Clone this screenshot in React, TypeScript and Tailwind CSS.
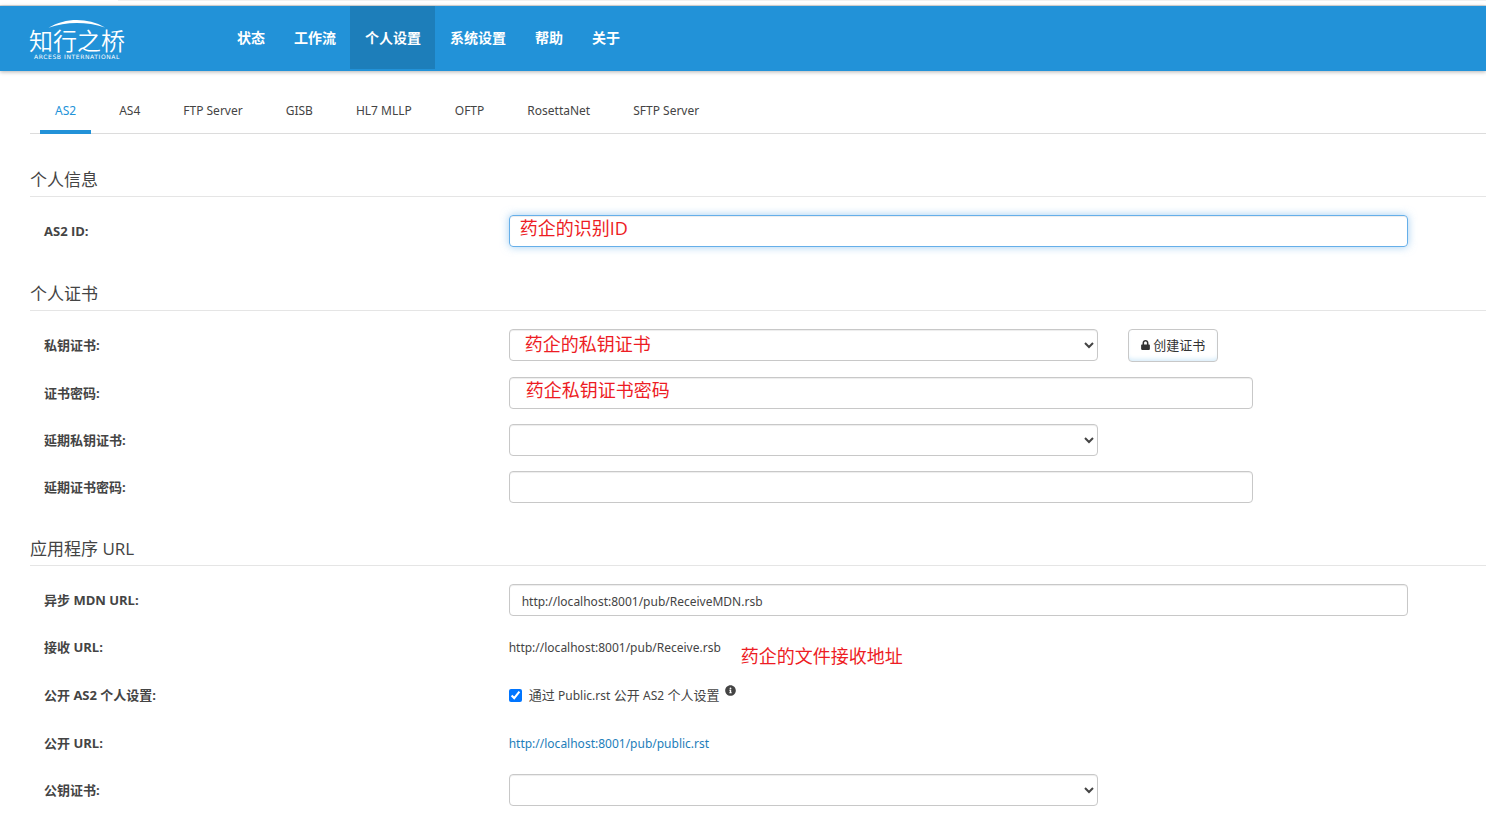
import type { ReactNode } from "react";
import { FaInfoCircle, FaLock } from "react-icons/fa";

const navItems = ["状态", "工作流", "个人设置", "系统设置", "帮助", "关于"];
const tabs = ["AS2", "AS4", "FTP Server", "GISB", "HL7 MLLP", "OFTP", "RosettaNet", "SFTP Server"];

const fieldClass =
  "block h-8 w-full rounded border border-[#c8c8c8] bg-white text-xs text-[#444] shadow-[inset_0_1px_1px_rgba(0,0,0,0.075)] outline-none";

function Logo() {
  return (
    <a href="#home" aria-label="知行之桥 ARCESB INTERNATIONAL" className="flex w-24 flex-col items-center text-white">
      <svg viewBox="0 0 58 8" className="h-2 w-[58px]" aria-hidden="true">
        <path d="M0.5 7.8 C18 -2.4 39 -2.4 57 7.4 C38 1.5 18 1.6 0.5 7.8Z" fill="currentColor" />
      </svg>
      <span className="text-2xl leading-[25px] font-[350]">知行之桥</span>
      <span className="font-['DejaVu_Sans',sans-serif] text-[6px] leading-[8px] tracking-widest whitespace-nowrap">
        ARCESB INTERNATIONAL
      </span>
    </a>
  );
}

function Section({ title, children }: { title: string; children: ReactNode }) {
  return (
    <section className="pt-[34px]">
      <h2 className="ml-[30px] border-b border-[#e5e5e5] pb-1 font-['Open_Sans','Noto_Sans_CJK_SC',sans-serif] text-[17px] leading-6 text-[#444]">
        {title}
      </h2>
      <div className="mt-[18px] mr-[63px] ml-[29px] flex flex-col gap-[15px]">{children}</div>
    </section>
  );
}

function Row({ label, htmlFor, tall, children }: { label: string; htmlFor: string; tall?: boolean; children: ReactNode }) {
  return (
    <div className={tall ? "grid h-[33px] grid-cols-3" : "grid h-8 grid-cols-3"}>
      <label
        htmlFor={htmlFor}
        className="pl-[15px] font-['Open_Sans','Noto_Sans_CJK_SC',sans-serif] text-[13px] leading-8 font-bold text-[#444]"
      >
        {label}
      </label>
      <div className="col-span-2 grid grid-cols-12 leading-8">{children}</div>
    </div>
  );
}

function Note({ className, children }: { className: string; children: ReactNode }) {
  return (
    <span
      className={`pointer-events-none absolute font-['Open_Sans','Noto_Sans_CJK_SC',sans-serif] text-lg leading-6 whitespace-nowrap text-[#ed1c24] ${className}`}
    >
      {children}
    </span>
  );
}

export default function App() {
  return (
    <div
      lang="zh-CN"
      className="min-h-screen overflow-hidden bg-white pb-6 font-['Noto_Sans','Noto_Sans_CJK_SC',sans-serif] text-xs text-[#444]"
    >
      <div className="h-[6px] border-b border-[#dcdcdc]">
        <div className="ml-[118px] h-px bg-[#f0f0f0]" />
      </div>
      <header className="flex h-[65px] items-start bg-[#2292d8] pl-[29px] shadow-[0_1px_4px_rgba(0,0,0,0.3)]">
        <div className="w-[193px] pt-[14px]">
          <Logo />
        </div>
        <nav className="flex">
          {navItems.map((item) => (
            <a
              key={item}
              href={`#${item}`}
              className={
                item === "个人设置"
                  ? "h-[63px] bg-[#1d7eba] pr-[14px] pl-[15px] text-sm leading-[63px] font-bold text-white"
                  : "h-[63px] pr-[14px] pl-[15px] text-sm leading-[63px] font-bold text-white"
              }
            >
              {item}
            </a>
          ))}
        </nav>
      </header>

      <nav className="mt-[17px] ml-[30px] flex h-[46px] gap-[13px] border-b border-[#dcdcdc] pl-[10px]">
        {tabs.map((tab) => (
          <a
            key={tab}
            href={`#${tab}`}
            className={
              tab === "AS2"
                ? "h-[46px] border-b-4 border-[#2292d8] px-[15px] leading-[46px] text-[#2292d8]"
                : "h-[46px] px-[15px] leading-[46px] text-[#444]"
            }
          >
            {tab}
          </a>
        ))}
      </nav>

      <main>
        <Section title="个人信息">
          <Row label="AS2 ID:" htmlFor="as2-id" tall>
            <div className="relative col-span-12 px-[15px]">
              <input
                id="as2-id"
                className="block h-8 w-full rounded border border-[#66afe9] px-3 shadow-[inset_0_1px_1px_rgba(0,0,0,0.075),0_0_8px_rgba(102,175,233,0.6)] outline-none"
              />
              <Note className="top-px left-[26px]">药企的识别ID</Note>
            </div>
          </Row>
        </Section>

        <Section title="个人证书">
          <Row label="私钥证书:" htmlFor="private-cert" tall>
            <div className="relative col-span-8 px-[15px]">
              <select id="private-cert" className={fieldClass} />
              <Note className="top-[3px] left-[31px]">药企的私钥证书</Note>
            </div>
            <div className="col-span-4 px-[15px]">
              <button
                type="button"
                className="flex h-[33px] items-center gap-[3px] rounded border border-[#c8c8c8] bg-white px-3 pb-0.5 font-['Noto_Sans_CJK_SC',sans-serif] text-[13px] text-[#333] shadow-[inset_0_-4px_4px_-2px_#d8edfa]"
              >
                <FaLock className="h-[10px] w-[9px]" aria-hidden="true" />
                创建证书
              </button>
            </div>
          </Row>
          <Row label="证书密码:" htmlFor="cert-password">
            <div className="relative col-span-10 px-[15px]">
              <input id="cert-password" type="password" className={`${fieldClass} px-3`} />
              <Note className="top-px left-8">药企私钥证书密码</Note>
            </div>
          </Row>
          <Row label="延期私钥证书:" htmlFor="rollover-cert">
            <div className="col-span-8 px-[15px]">
              <select id="rollover-cert" className={fieldClass} />
            </div>
          </Row>
          <Row label="延期证书密码:" htmlFor="rollover-password">
            <div className="col-span-10 px-[15px]">
              <input id="rollover-password" type="password" className={`${fieldClass} px-3`} />
            </div>
          </Row>
        </Section>

        <Section title="应用程序 URL">
          <Row label="异步 MDN URL:" htmlFor="mdn-url">
            <div className="col-span-12 px-[15px]">
              <input
                id="mdn-url"
                defaultValue="http://localhost:8001/pub/ReceiveMDN.rsb"
                className={`${fieldClass} px-3 pt-0.5`}
              />
            </div>
          </Row>
          <Row label="接收 URL:" htmlFor="receive-url" tall>
            <div className="relative col-span-12 px-[15px] leading-[34px]">
              <output id="receive-url">http://localhost:8001/pub/Receive.rsb</output>
              <Note className="top-[13px] left-[247px]">药企的文件接收地址</Note>
            </div>
          </Row>
          <Row label="公开 AS2 个人设置:" htmlFor="publish" tall>
            <div className="col-span-12 flex items-start px-[15px]">
              <label className="flex items-center gap-[7px]">
                <input id="publish" type="checkbox" defaultChecked className="h-[13px] w-[13px]" />
                <span className="text-[13px]">
                  通过 <span className="text-xs">Public.rst</span> 公开 <span className="text-xs">AS2</span> 个人设置
                </span>
              </label>
              <FaInfoCircle className="mt-[6px] ml-[5px] h-[11px] w-[11px]" aria-hidden="true" />
            </div>
          </Row>
          <Row label="公开 URL:" htmlFor="public-url">
            <div className="col-span-12 px-[15px] leading-[34px]">
              <a id="public-url" href="#public" className="text-[#1d7eba]">
                http://localhost:8001/pub/public.rst
              </a>
            </div>
          </Row>
          <Row label="公钥证书:" htmlFor="public-cert">
            <div className="col-span-8 px-[15px]">
              <select id="public-cert" className={fieldClass} />
            </div>
          </Row>
        </Section>
      </main>
    </div>
  );
}
